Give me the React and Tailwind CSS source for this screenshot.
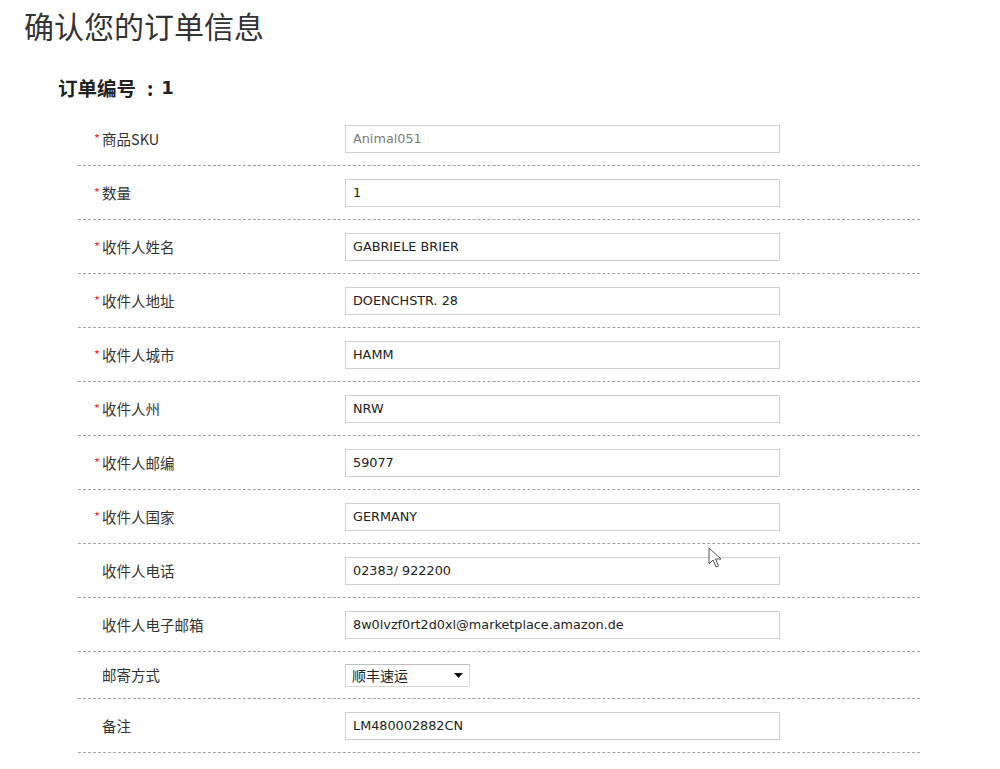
import React from "react";

const rows = [
  { label: "商品SKU", value: "Animal051", required: true, muted: true },
  { label: "数量", value: "1", required: true },
  { label: "收件人姓名", value: "GABRIELE BRIER", required: true },
  { label: "收件人地址", value: "DOENCHSTR. 28", required: true },
  { label: "收件人城市", value: "HAMM", required: true },
  { label: "收件人州", value: "NRW", required: true },
  { label: "收件人邮编", value: "59077", required: true },
  { label: "收件人国家", value: "GERMANY", required: true },
  { label: "收件人电话", value: "02383/ 922200" },
  { label: "收件人电子邮箱", value: "8w0lvzf0rt2d0xl@marketplace.amazon.de" },
];

const cjk = { fontFamily: '"Noto Sans CJK SC", "Liberation Sans", sans-serif' };
const latin = { fontFamily: '"DejaVu Sans", "Noto Sans CJK SC", sans-serif' };

function Label({ text, required }) {
  return (
    <div className="w-[267px] shrink-0 flex items-center pl-[16px] text-[14.5px] text-[#333]" style={cjk}>
      {required ? (
        <span className="w-[8px] text-[#e4393c] text-[13px]">*</span>
      ) : (
        <span className="w-[8px]" />
      )}
      <span>{text}</span>
    </div>
  );
}

function Row({ label, value, required, muted }) {
  return (
    <div className="flex items-center h-[54px] border-b border-dashed border-[#a0a0a0]">
      <Label text={label} required={required} />
      <div
        className={`w-[435px] h-[28px] border border-[#cfcfcf] flex items-center px-[7px] text-[12.8px] ${
          muted ? "text-[#7a7a7a]" : "text-[#222]"
        }`}
        style={latin}
      >
        {value}
      </div>
    </div>
  );
}

export default function App() {
  return (
    <div className="relative min-h-screen bg-white text-[#333]" style={cjk}>
      <h1 className="pl-[24px] pt-[7px] text-[30px] leading-[36px] font-normal text-[#333]">
        确认您的订单信息
      </h1>

      <h2 className="ml-[58px] mt-[32px] flex items-center text-[19.5px] leading-[26px] font-bold text-[#222]">
        <span>订单编号</span>
        <span className="ml-[11px] mr-[8px]">:</span>
        <span style={latin} className="text-[18px]">1</span>
      </h2>

      <div className="ml-[78px] w-[842px] mt-[11px]">
        {rows.map((r) => (
          <Row key={r.label} {...r} />
        ))}

        {/* shipping method */}
        <div className="flex items-center h-[47px] border-b border-dashed border-[#a0a0a0]">
          <Label text="邮寄方式" />
          <div className="w-[125px] h-[23px] border border-[#d8d8d8] border-t-[#bdbdbd] flex items-center justify-between pl-[6px] pr-[6px] text-[14px] text-[#222]">
            <span>顺丰速运</span>
            <svg width="9" height="5" viewBox="0 0 9 5">
              <path d="M0 0 H9 L4.5 5 Z" fill="#111" />
            </svg>
          </div>
        </div>

        <Row label="备注" value="LM480002882CN" />
      </div>

      {/* mouse pointer */}
      <svg
        className="absolute left-[708px] top-[547px]"
        width="16"
        height="22"
        viewBox="0 0 16 22"
      >
        <path
          d="M1 1 L1 17 L5 13 L8 20 L10.5 19 L7.5 12 L13 12 Z"
          fill="#fff"
          stroke="#555"
          strokeWidth="1"
          strokeLinejoin="round"
        />
      </svg>
    </div>
  );
}
